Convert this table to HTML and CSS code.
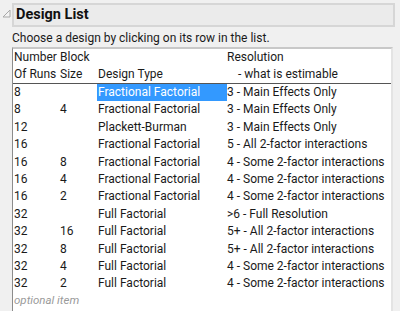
FILE: index.html
```html
<!DOCTYPE html>
<html>
<head>
<meta charset="utf-8">
<link rel="stylesheet" href="styles.css">
</head>
<body>
<div class="panel">
  <div class="title-row">
    <svg class="tri" width="9" height="9" viewBox="0 0 9 9"><path d="M8 1 L8 8 L1 8 Z" fill="#f4f4f4" stroke="#a8a8a8" stroke-width="1"/></svg>
    <div class="title-box">Design List</div>
  </div>
  <div class="content">
    <div class="hint">Choose a design by clicking on its row in the list.</div>
    <div class="list">
      <div class="head">
        <div class="row"><span class="c1">Number</span><span class="c2">Block</span><span class="c3"></span><span class="c4">Resolution</span></div>
        <div class="row"><span class="c1">Of Runs</span><span class="c2">Size</span><span class="c3">Design Type</span><span class="c4 ind">- what is estimable</span></div>
      </div>
      <div class="body">
        <div class="row"><span class="c1">8</span><span class="c2"></span><span class="c3 sel">Fractional Factorial</span><span class="c4">3 - Main Effects Only</span></div>
        <div class="row"><span class="c1">8</span><span class="c2">4</span><span class="c3">Fractional Factorial</span><span class="c4">3 - Main Effects Only</span></div>
        <div class="row"><span class="c1">12</span><span class="c2"></span><span class="c3">Plackett-Burman</span><span class="c4">3 - Main Effects Only</span></div>
        <div class="row"><span class="c1">16</span><span class="c2"></span><span class="c3">Fractional Factorial</span><span class="c4">5 - All 2-factor interactions</span></div>
        <div class="row"><span class="c1">16</span><span class="c2">8</span><span class="c3">Fractional Factorial</span><span class="c4">4 - Some 2-factor interactions</span></div>
        <div class="row"><span class="c1">16</span><span class="c2">4</span><span class="c3">Fractional Factorial</span><span class="c4">4 - Some 2-factor interactions</span></div>
        <div class="row"><span class="c1">16</span><span class="c2">2</span><span class="c3">Fractional Factorial</span><span class="c4">4 - Some 2-factor interactions</span></div>
        <div class="row"><span class="c1">32</span><span class="c2"></span><span class="c3">Full Factorial</span><span class="c4">&gt;6 - Full Resolution</span></div>
        <div class="row"><span class="c1">32</span><span class="c2">16</span><span class="c3">Full Factorial</span><span class="c4">5+ - All 2-factor interactions</span></div>
        <div class="row"><span class="c1">32</span><span class="c2">8</span><span class="c3">Full Factorial</span><span class="c4">5+ - All 2-factor interactions</span></div>
        <div class="row"><span class="c1">32</span><span class="c2">4</span><span class="c3">Full Factorial</span><span class="c4">4 - Some 2-factor interactions</span></div>
        <div class="row"><span class="c1">32</span><span class="c2">2</span><span class="c3">Full Factorial</span><span class="c4">4 - Some 2-factor interactions</span></div>
      </div>
      <div class="optional">optional item</div>
    </div>
  </div>
</div>
</body>
</html>
```

FILE: styles.css
```css
html, body {
  margin: 0;
  padding: 0;
  background: #f0f0f0;
  font-family: "Roboto", "Noto Sans", sans-serif;
  font-size: 12px;
  color: #1a1a1a;
}
.panel {
  width: 400px;
  height: 311px;
  overflow: hidden;
  padding-top: 3px;
  box-sizing: border-box;
}
.title-row {
  display: flex;
  align-items: flex-start;
  padding-left: 2px;
  padding-right: 5px;
}
.tri {
  margin-top: 6px;
  margin-right: 1px;
  flex: none;
}
.title-box {
  flex: 1;
  height: 20px;
  border: 2px solid #d6d6d6;
  background: #ebebeb;
  font-weight: bold;
  font-size: 14.5px;
  line-height: 20px;
  padding-left: 2px;
  color: #111;
}
.content {
  padding-left: 12px;
  padding-right: 7px;
}
.hint {
  margin-top: 3px;
  height: 16px;
  line-height: 16px;
}
.list {
  margin-top: 1px;
  background: #fff;
  border-left: 1px solid #8c8c8c;
  border-top: 2px solid #c8c8c8;
  border-right: 2px solid #e4e4e4;
  height: 262px;
  overflow: hidden;
}
.head {
  border-bottom: 1px solid #555;
}
.row {
  display: flex;
  height: 17.4px;
  line-height: 17.4px;
  white-space: nowrap;
}
.head .row {
  height: 17px;
  line-height: 17px;
}
.c1 { flex: none; width: 47px; padding-left: 1px; box-sizing: border-box; }
.c2 { flex: none; width: 37px; }
.c3 { flex: none; width: 130px; padding-left: 1px; box-sizing: border-box; }
.c4 { flex: 1; min-width: 0; }
.ind { padding-left: 11px; }
.sel {
  background: #3399ff;
  color: #fff;
}
.optional {
  font-style: italic;
  color: #9a9a9a;
  font-size: 11.5px;
  line-height: 14px;
  padding-left: 1px;
}
```
